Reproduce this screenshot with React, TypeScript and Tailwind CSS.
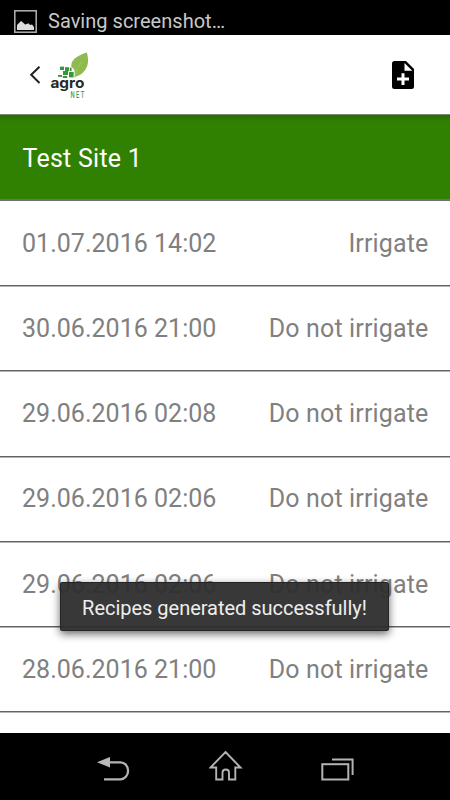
import React from "react";

const rows = [
  { date: "01.07.2016 14:02", action: "Irrigate" },
  { date: "30.06.2016 21:00", action: "Do not irrigate" },
  { date: "29.06.2016 02:08", action: "Do not irrigate" },
  { date: "29.06.2016 02:06", action: "Do not irrigate" },
  { date: "29.06.2016 02:06", action: "Do not irrigate" },
  { date: "28.06.2016 21:00", action: "Do not irrigate" },
];

function StatusBar() {
  return (
    <div className="flex h-[35px] shrink-0 items-start bg-black pl-[14px] pt-[10px]">
      <svg width="23" height="23" viewBox="0 0 23 23" className="shrink-0">
        <rect x="0.8" y="0.8" width="21.4" height="21.4" fill="none" stroke="#b4b4b4" strokeWidth="1.5" />
        <path d="M3 20V15L5 13L7 11L9 12.5L11 14.5L13 14L14.5 13.2L16 15L18 14.5L20 17V20Z" fill="#dcdcdc" />
      </svg>
      <span className="ml-[11px] whitespace-nowrap text-[20px] leading-[23px] tracking-[0.02px] text-[#c8c8c8]">Saving screenshot…</span>
    </div>
  );
}

function Logo() {
  return (
    <svg width="42" height="50" viewBox="49 50 42 50" className="ml-[8px]">
      <path d="M86.8 52.5C80 54.5 71.5 58.5 71.2 65.5C71.2 68 74.2 68 74.6 71V77.5C76 76 79.5 76 82.5 73C88.8 67.5 89 60 86.8 52.5Z" fill="#8fba4f" />
      <path d="M82.5 61C78 66 76 71 74.8 77.5" fill="none" stroke="#a9cb78" strokeWidth="0.6" />
      <g fill="#36963b">
        <rect x="60" y="66.6" width="4" height="3.4" />
        <rect x="65" y="67.2" width="4" height="4" />
        <rect x="69.8" y="67.6" width="1.8" height="3.6" />
        <rect x="63" y="71" width="5" height="4" />
        <rect x="58" y="75" width="4" height="1.8" />
        <rect x="62.8" y="76" width="4.4" height="2" />
        <rect x="69" y="72" width="4.6" height="5.4" />
      </g>
      <text x="50.4" y="88.4" textLength="34" lengthAdjust="spacingAndGlyphs" fontFamily="Inter, sans-serif" fontWeight="700" fontSize="14.5" fill="#292929">agro</text>
      <g transform="translate(70.4 97.8) scale(0.68 1)">
        <text x="0" y="0" textLength="20.5" lengthAdjust="spacing" fontFamily="Roboto, sans-serif" fontSize="8.6" fontWeight="500" fill="#4b9f50">NET</text>
      </g>
    </svg>
  );
}

function Header() {
  return (
    <header className="flex h-[80px] shrink-0 items-center border-b border-[#7d8a78] bg-white">
      <svg width="12" height="20" viewBox="0 0 12 20" className="ml-[29px]">
        <path d="M10.5 1.7L2.2 9.8L10.5 18" fill="none" stroke="#202020" strokeWidth="2" />
      </svg>
      <Logo />
      <svg width="22" height="28" viewBox="0 0 22 28" className="ml-auto mr-[36px]">
        <path d="M2.5 0H14L22 8V25.5Q22 28 19.5 28H2.5Q0 28 0 25.5V2.5Q0 0 2.5 0Z" fill="#000" />
        <path d="M12.5 2V9.8H20.3Z" fill="#fff" />
        <path d="M9.5 12.2H12.5V16.5H17V19.5H12.5V24H9.5V19.5H5V16.5H9.5Z" fill="#fff" />
      </svg>
    </header>
  );
}

function NavigationBar() {
  return (
    <nav className="flex h-[67px] shrink-0 justify-between bg-black pl-[97px] pr-[96px] pt-[17px]">
      <svg width="34" height="32" viewBox="0 0 34 32">
        <path d="M0 12.3L13 7V17.5Z" fill="#b9b9b9" />
        <path d="M12 12.3H23.5A7.6 8.5 0 0 1 23.5 29.3H7" fill="none" stroke="#b3b3b3" strokeWidth="2.3" />
      </svg>
      <svg width="34" height="32" viewBox="0.5 0 34 32">
        <path d="M17 2L32 17.5H26.8V29.5H20.5V22.5Q20.5 19.5 17.3 19.5Q14 19.5 14 22.5V29.5H7.7V17.5H2Z" fill="none" stroke="#b3b3b3" strokeWidth="1.9" />
      </svg>
      <svg width="34" height="32" viewBox="0 0 34 32">
        <rect x="2.3" y="14.2" width="26" height="15.3" fill="none" stroke="#b3b3b3" strokeWidth="2" />
        <path d="M12 9.5H32.6V25" fill="none" stroke="#b3b3b3" strokeWidth="2" />
      </svg>
    </nav>
  );
}

export default function App() {
  return (
    <div className="relative flex h-[800px] w-[450px] flex-col overflow-hidden bg-white font-[Roboto,sans-serif]">
      <StatusBar />
      <Header />
      <div className="flex h-[86px] shrink-0 items-center border-b-2 border-[#707070] bg-[#308102] bg-linear-to-b from-[#286c02] to-[#308102] to-8% pl-[22.5px] pt-[3px] text-[25px] tracking-[0.25px] text-white">
        Test Site 1
      </div>
      <main className="min-h-0 flex-1 overflow-hidden bg-white">
        {rows.map((row, i) => (
          <div
            key={i}
            className="flex h-[85.2px] items-center justify-between border-b border-[#626262] pl-[22px] pr-[21.5px] pt-[1px] text-[25px] text-[#808080] shadow-[0_1px_0_#b4b4b4]"
          >
            <span className="tracking-[0.02px]">{row.date}</span>
            <span className="tracking-[0.15px]">{row.action}</span>
          </div>
        ))}
      </main>
      <NavigationBar />
      <div className="absolute left-[60px] top-[582px] flex h-[49px] w-[329px] items-center justify-center whitespace-nowrap rounded-[2px] border border-[#222]/90 bg-[#2d2d2d]/95 pt-[2px] text-[20px] tracking-[-0.02px] text-[#eeeeee] shadow-[0_3px_9px_rgba(0,0,0,0.6)]">
        Recipes generated successfully!
      </div>
    </div>
  );
}
